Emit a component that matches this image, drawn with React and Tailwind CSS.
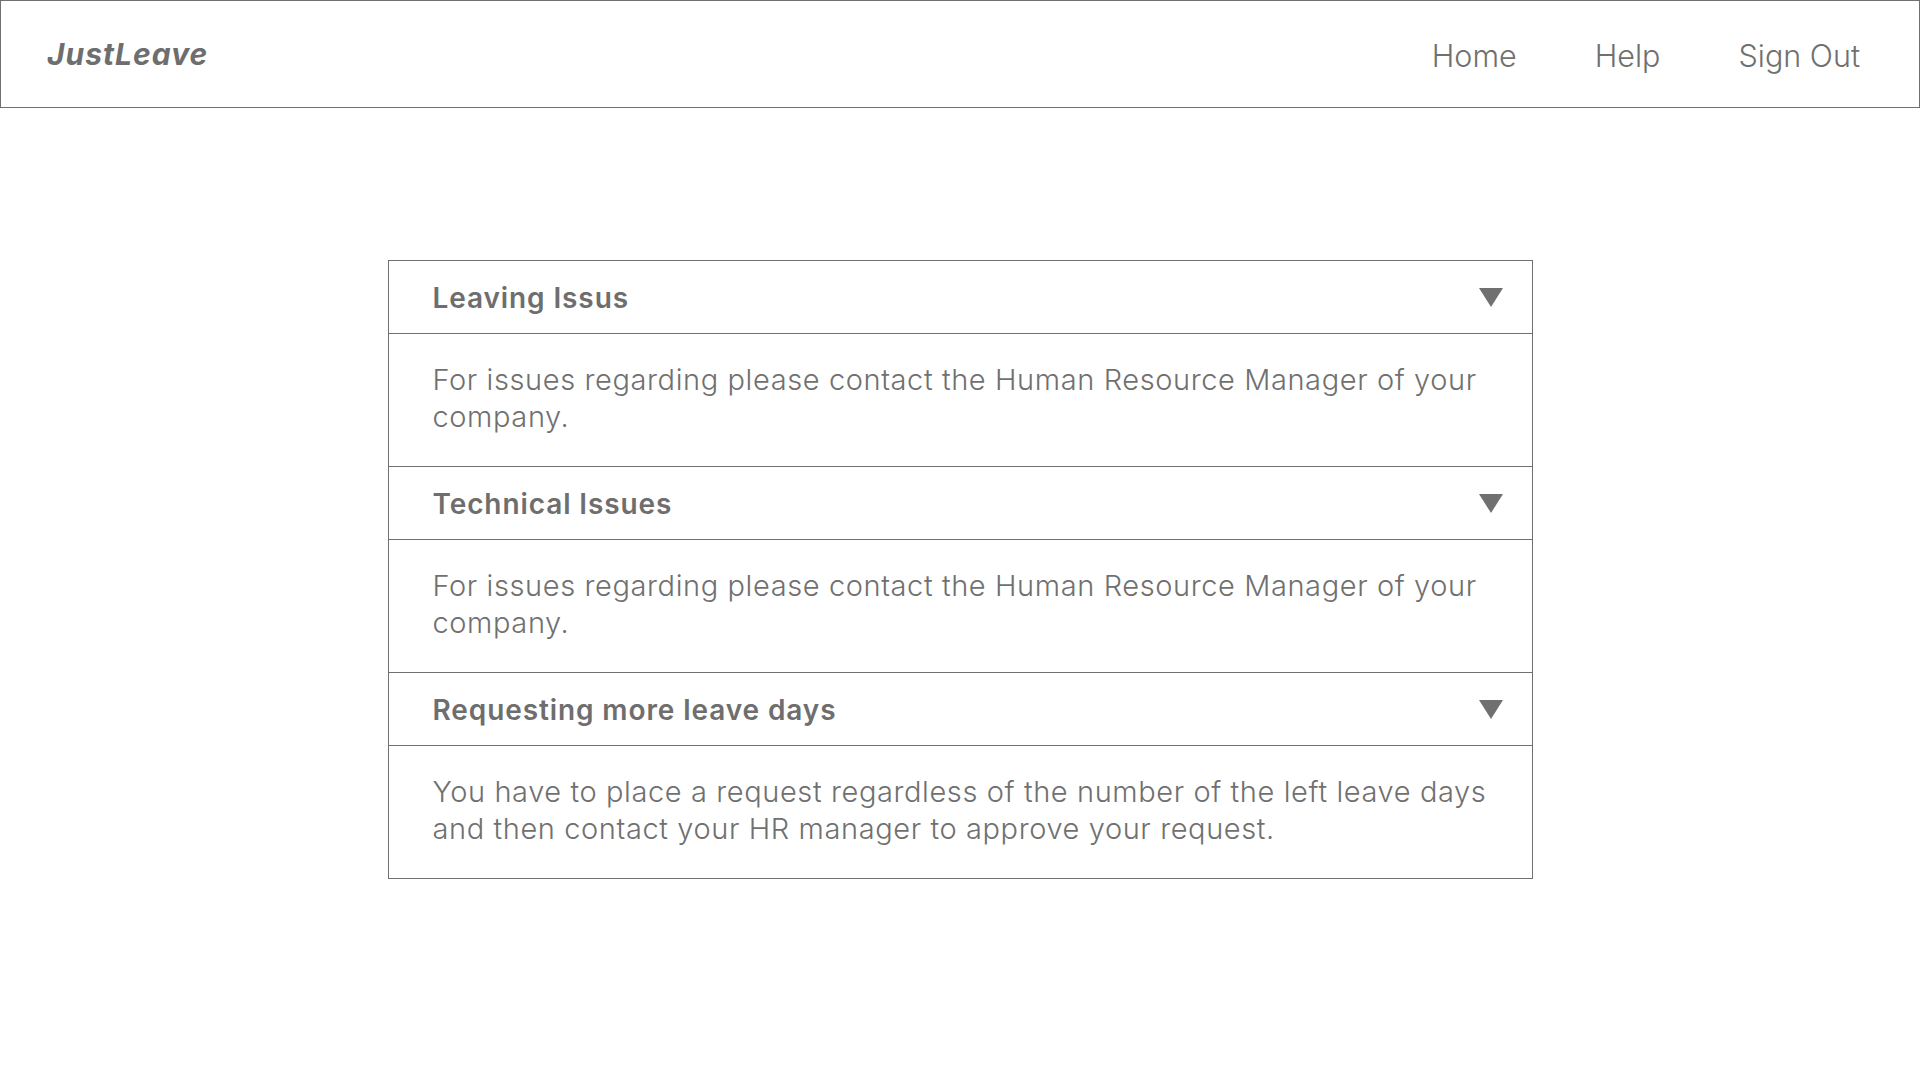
import { useState } from "react"

const faqs = [
  {
    title: "Leaving Issus",
    body: "For issues regarding please contact the Human Resource Manager of your company.",
  },
  {
    title: "Technical Issues",
    body: "For issues regarding please contact the Human Resource Manager of your company.",
  },
  {
    title: "Requesting more leave days",
    body: "You have to place a request regardless of the number of the left leave days and then contact your HR manager to approve your request.",
  },
]

function Caret() {
  return (
    <svg width="24" height="19" viewBox="0 0 24 19" className="shrink-0">
      <polygon points="0,0 24,0 12,19" fill="#707070" />
    </svg>
  )
}

export default function App() {
  const [open, setOpen] = useState([true, true, true])

  const toggle = (i) => {
    const next = [...open]
    next[i] = !next[i]
    setOpen(next)
  }

  return (
    <div className="min-h-screen bg-white text-[#707070] font-['Inter',sans-serif]">
      {/* top bar */}
      <header className="flex h-[108px] items-center justify-between border border-[#707070] pl-[46px] pr-[59px]">
        <span className="text-[30px] font-bold italic tracking-[1px] text-[#6e6e6e]">JustLeave</span>
        <nav className="flex items-center gap-[78px] pt-[4px] text-[30.5px] font-light text-[#707070]">
          <a href="#">Home</a>
          <a href="#">Help</a>
          <a href="#">Sign Out</a>
        </nav>
      </header>

      {/* faq accordion */}
      <main className="flex justify-center pt-[152px]">
        <div className="w-[1145px] border border-[#707070]">
          {faqs.map((item, i) => (
            <div key={i} className={i > 0 ? "border-t border-[#707070]" : ""}>
              <button
                onClick={() => toggle(i)}
                className="flex h-[72px] w-full items-center justify-between pl-[44px] pr-[29px] pt-[1px] text-left"
              >
                <span className="text-[28px] font-semibold tracking-[0.9px] text-[#6e6e6e]">{item.title}</span>
                <Caret />
              </button>
              {open[i] && (
                <div className="h-[133px] border-t border-[#707070] pl-[44px] pr-[40px] pt-[27px]">
                  <p className="text-[29px] font-light leading-[37px] tracking-[0.6px] text-[#707070]">{item.body}</p>
                </div>
              )}
            </div>
          ))}
        </div>
      </main>
    </div>
  )
}
